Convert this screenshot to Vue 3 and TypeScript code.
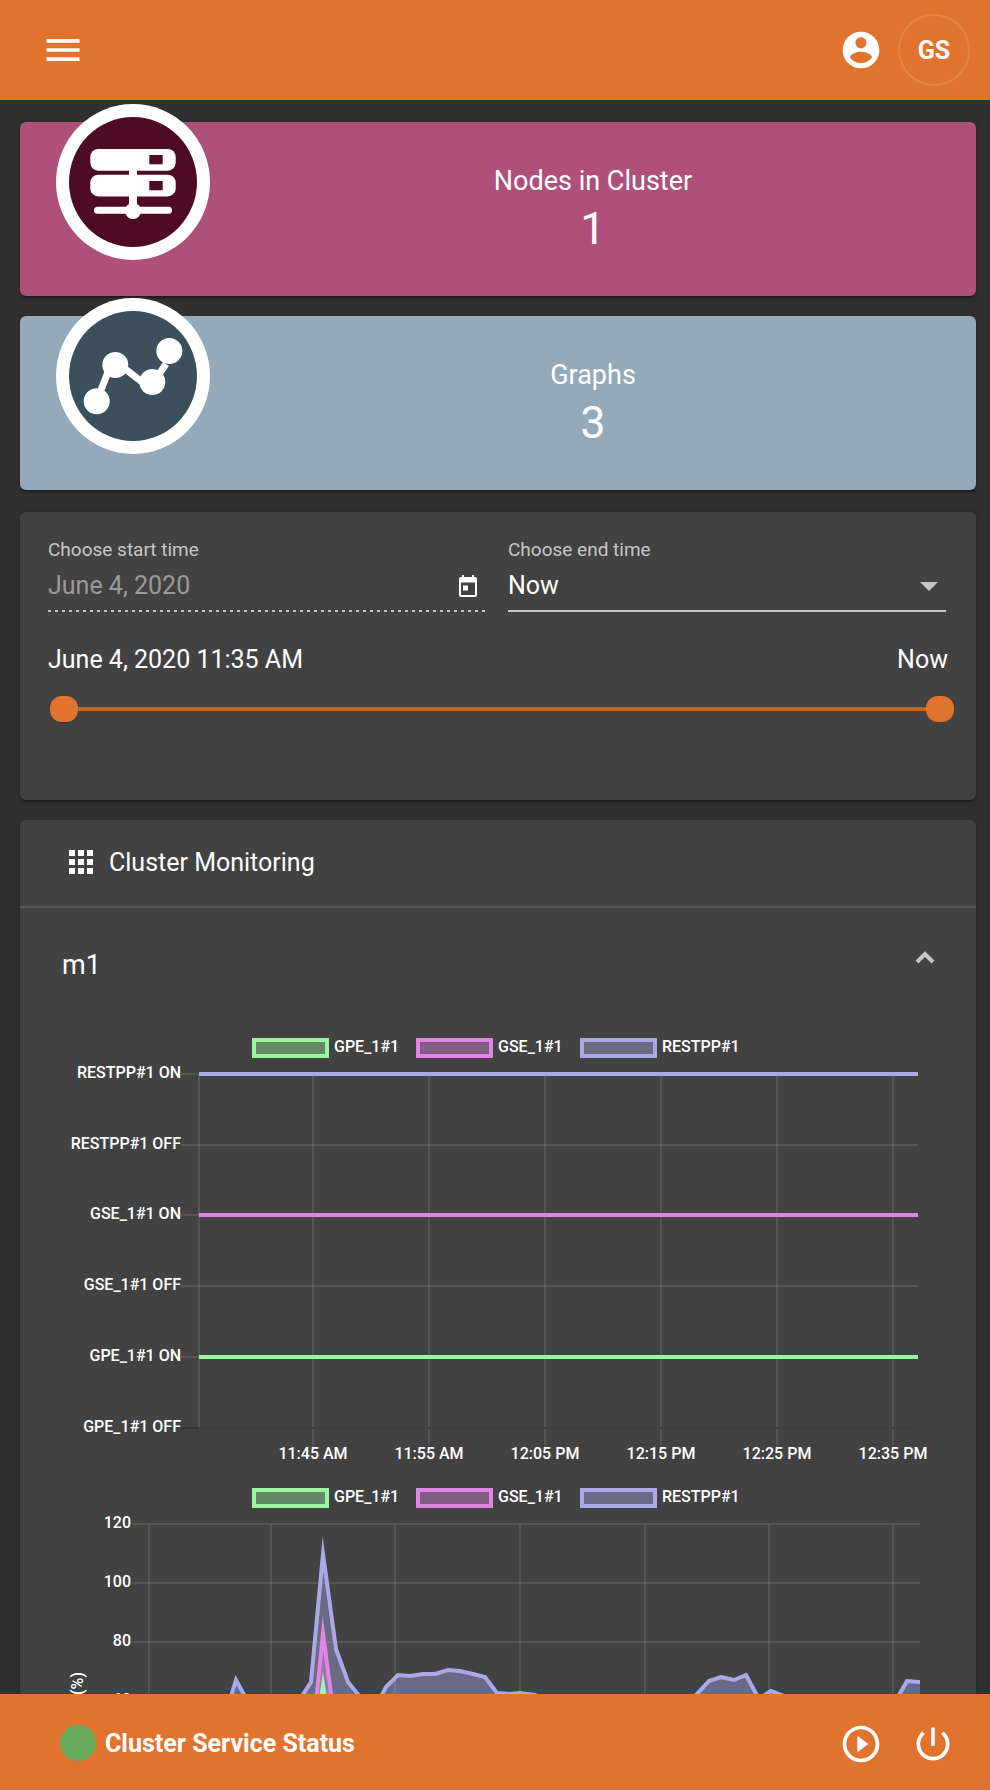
<script setup lang="ts">
import { ref } from 'vue'

type Point = [number, number]
interface Series {
  name: string
  color: string
  boxX: number
  textX: number
}

const startDate = ref('June 4, 2020')
const endTime = ref('Now')
const rangeStart = ref(0)
const rangeEnd = ref(100)
const expanded = ref(true)

const series: Series[] = [
  { name: 'GPE_1#1', color: '#9cf5a0', boxX: 234, textX: 314 },
  { name: 'GSE_1#1', color: '#e184e3', boxX: 398, textX: 478 },
  { name: 'RESTPP#1', color: '#aba8e8', boxX: 562, textX: 642 },
]

const statusRows = [
  { label: 'RESTPP#1 ON', y: 54, color: '#aba8e8' },
  { label: 'RESTPP#1 OFF', y: 125, color: '' },
  { label: 'GSE_1#1 ON', y: 195, color: '#e184e3' },
  { label: 'GSE_1#1 OFF', y: 266, color: '' },
  { label: 'GPE_1#1 ON', y: 337, color: '#9cf5a0' },
]

const times = ['11:45 AM', '11:55 AM', '12:05 PM', '12:15 PM', '12:25 PM', '12:35 PM'].map(
  (label, i) => ({ label, x: 293 + i * 116 }),
)

const usageRows = [120, 100, 80, 60].map((value, i) => ({ value, y: 54 + i * 59 }))
const usageColumns = [251, 375, 500, 625, 749, 873]

const restpp: Point[] = [
  [129, 263], [204, 249], [216, 210], [228, 232], [241, 250], [266, 250], [279, 231], [291, 212],
  [303, 84], [316, 179], [328, 212], [341, 228], [353, 243], [366, 217], [378, 205], [390, 206],
  [403, 204], [415, 204], [428, 200], [440, 201], [453, 204], [465, 207], [477, 223], [490, 224],
  [500, 223], [515, 225], [540, 237], [664, 237], [676, 225], [689, 211], [701, 207], [714, 210],
  [726, 205], [739, 229], [751, 221], [764, 226], [788, 240], [863, 240], [875, 232], [887, 211],
  [900, 212],
]
const gse: Point[] = [[129, 320], [279, 310], [291, 284], [303, 163], [316, 262], [328, 300], [900, 320]]
const gpe: Point[] = [[129, 380], [279, 370], [291, 296], [303, 215], [316, 296], [328, 360], [900, 380]]

const areas = [
  { color: '#aba8e8', points: restpp },
  { color: '#e184e3', points: gse },
  { color: '#9cf5a0', points: gpe },
]

const line = (points: Point[]): string => points.map((p) => p.join(',')).join(' ')
const area = (points: Point[]): string => `${line(points)} 900,408 129,408`
</script>

<template>
  <div class="app">
    <header class="topbar">
      <button class="icon-btn" type="button" aria-label="Menu">
        <svg class="icon" viewBox="0 0 24 24"><path d="M3 18h18v-2H3v2zm0-5h18v-2H3v2zm0-7v2h18V6H3z" /></svg>
      </button>
      <div class="account">
        <button class="icon-btn" type="button" aria-label="Account">
          <svg class="icon" viewBox="0 0 24 24">
            <path d="M12 2C6.480 2 2 6.480 2 12s4.480 10 10 10 10-4.480 10-10S17.520 2 12 2zm0 3c1.660 0 3 1.340 3 3s-1.340 3-3 3-3-1.340-3-3 1.340-3 3-3zm0 14.200c-2.500 0-4.710-1.280-6-3.220.030-1.990 4-3.080 6-3.080 1.990 0 5.970 1.090 6 3.080-1.290 1.940-3.500 3.220-6 3.220z" />
          </svg>
        </button>
        <button class="avatar" type="button">GS</button>
      </div>
    </header>

    <main class="content">
      <section class="card metric nodes">
        <svg class="badge" viewBox="0 0 154 156" aria-hidden="true">
          <ellipse cx="77" cy="78" rx="77" ry="78" fill="#fff" />
          <ellipse cx="77" cy="78" rx="64" ry="65" fill="#4d0b26" />
          <g fill="#fff">
            <rect x="34.300" y="45" width="85.400" height="21.700" rx="8" />
            <rect x="34.300" y="70.700" width="85.400" height="21.700" rx="8" />
            <rect x="73" y="60" width="8" height="48" />
            <rect x="38" y="102.700" width="78" height="7" rx="3.500" />
            <circle cx="77" cy="107" r="8" />
          </g>
          <g fill="#4d0b26">
            <rect x="93.300" y="51" width="13.400" height="9.300" />
            <rect x="93.300" y="77" width="13.400" height="9.300" />
          </g>
        </svg>
        <div class="metric-text">
          <h2>Nodes in Cluster</h2>
          <p>1</p>
        </div>
      </section>

      <section class="card metric graphs">
        <svg class="badge" viewBox="0 0 154 156" aria-hidden="true">
          <ellipse cx="77" cy="78" rx="77" ry="78" fill="#fff" />
          <ellipse cx="77" cy="78" rx="64" ry="65" fill="#3c505c" />
          <path d="M43 97L54 69M64 67l26 20M99 82l11-16" fill="none" stroke="#fff" stroke-width="7" />
          <g fill="#fff">
            <circle cx="40.700" cy="103.300" r="13" />
            <circle cx="59.300" cy="67" r="13" />
            <circle cx="96.300" cy="84" r="13" />
            <circle cx="113.300" cy="53" r="13" />
          </g>
        </svg>
        <div class="metric-text">
          <h2>Graphs</h2>
          <p>3</p>
        </div>
      </section>

      <section class="card period">
        <div class="fields">
          <div class="field">
            <label for="start">Choose start time</label>
            <div class="control dotted">
              <input id="start" v-model="startDate" type="text" readonly />
              <button class="icon-btn calendar" type="button" aria-label="Open calendar">
                <svg viewBox="0 0 18 22" width="18" height="22">
                  <path d="M3 0h2v2h8V0h2v2h1a2 2 0 0 1 2 2v16a2 2 0 0 1-2 2H2a2 2 0 0 1-2-2V4a2 2 0 0 1 2-2h1zM2 7.500V20h14V7.500zM4 10.500h5v5H4z" fill-rule="evenodd" />
                </svg>
              </button>
            </div>
          </div>
          <div class="field">
            <label for="end">Choose end time</label>
            <div class="control solid">
              <select id="end" v-model="endTime">
                <option>Now</option>
              </select>
              <svg class="arrow" viewBox="0 0 18 9" width="18" height="9"><path d="M0 0h18L9 9z" /></svg>
            </div>
          </div>
        </div>
        <div class="range-labels">
          <span>June 4, 2020 11:35 AM</span>
          <span>Now</span>
        </div>
        <div class="range">
          <span class="track"></span>
          <input v-model.number="rangeStart" type="range" min="0" max="100" aria-label="Range start" />
          <input v-model.number="rangeEnd" type="range" min="0" max="100" aria-label="Range end" />
        </div>
      </section>

      <section class="card monitoring">
        <div class="card-head">
          <svg class="apps" viewBox="0 0 24 24" aria-hidden="true">
            <path d="M4 8h4V4H4v4zm6 12h4v-4h-4v4zm-6 0h4v-4H4v4zm0-6h4v-4H4v4zm6 0h4v-4h-4v4zm6-10v4h4V4h-4zm-6 4h4V4h-4v4zm6 6h4v-4h-4v4zm0 6h4v-4h-4v4z" />
          </svg>
          <h2>Cluster Monitoring</h2>
        </div>
        <button class="panel-head" type="button" :aria-expanded="expanded" @click="expanded = !expanded">
          <span>m1</span>
          <svg viewBox="0 0 20 24" width="20" height="24"><path d="M2 9l8-8 8 8" /></svg>
        </button>

        <div v-if="expanded" class="charts">
          <svg class="chart" viewBox="0 0 956 450" role="img" aria-label="Service status">
            <g v-for="s in series" :key="s.name">
              <rect :x="s.boxX" y="20" width="73" height="16" :fill="s.color" fill-opacity="0.4" :stroke="s.color" stroke-width="4" />
              <text :x="s.textX" y="32">{{ s.name }}</text>
            </g>
            <g class="grid">
              <line v-for="r in statusRows" :key="r.y" x1="161" x2="898" :y1="r.y" :y2="r.y" />
              <line x1="179" x2="179" y1="54" y2="408" />
              <line v-for="t in times" :key="t.x" :x1="t.x" :x2="t.x" y1="54" y2="425" />
            </g>
            <line class="zero" x1="161" x2="179" y1="408" y2="408" />
            <line class="base" x1="180" x2="898" y1="408" y2="408" />
            <template v-for="r in statusRows" :key="r.label">
              <line v-if="r.color" x1="179" x2="898" :y1="r.y" :y2="r.y" :stroke="r.color" stroke-width="4" />
              <text class="end" x="161" :y="r.y + 4">{{ r.label }}</text>
            </template>
            <text class="end" x="161" y="412">GPE_1#1 OFF</text>
            <text v-for="t in times" :key="t.label" class="mid" :x="t.x" y="439">{{ t.label }}</text>
          </svg>

          <svg class="chart" viewBox="0 0 956 450" role="img" aria-label="Usage in percent">
            <g v-for="s in series" :key="s.name">
              <rect :x="s.boxX" y="20" width="73" height="16" :fill="s.color" fill-opacity="0.4" :stroke="s.color" stroke-width="4" />
              <text :x="s.textX" y="32">{{ s.name }}</text>
            </g>
            <g class="grid">
              <line v-for="r in usageRows" :key="r.value" x1="112" x2="900" :y1="r.y" :y2="r.y" />
              <line x1="129" x2="129" y1="54" y2="408" />
              <line v-for="x in usageColumns" :key="x" :x1="x" :x2="x" y1="54" y2="425" />
            </g>
            <g v-for="a in areas" :key="a.color">
              <polygon :points="area(a.points)" :fill="a.color" fill-opacity="0.4" />
              <polyline :points="line(a.points)" fill="none" :stroke="a.color" stroke-width="4" stroke-miterlimit="10" />
            </g>
            <text v-for="r in usageRows" :key="r.value" class="end" x="111" :y="r.y + 4">{{ r.value }}</text>
            <text class="end" transform="translate(63 202) rotate(-90)">(%)</text>
          </svg>
        </div>
      </section>
    </main>

    <footer class="statusbar">
      <span class="dot"></span>
      <strong>Cluster Service Status</strong>
      <div class="actions">
        <button class="icon-btn" type="button" aria-label="Start">
          <svg class="icon" viewBox="0 0 24 24">
            <path d="M10 16.500l6-4.500-6-4.500v9zM12 2C6.480 2 2 6.480 2 12s4.480 10 10 10 10-4.480 10-10S17.520 2 12 2zm0 18c-4.410 0-8-3.590-8-8s3.590-8 8-8 8 3.590 8 8-3.590 8-8 8z" />
          </svg>
        </button>
        <button class="icon-btn" type="button" aria-label="Stop">
          <svg class="icon" viewBox="0 0 24 24">
            <path d="M13 3h-2v10h2V3zm4.830 2.170l-1.420 1.420C17.990 7.860 19 9.810 19 12c0 3.870-3.130 7-7 7s-7-3.130-7-7c0-2.190 1.010-4.140 2.580-5.420L6.170 5.170C4.230 6.820 3 9.260 3 12c0 4.970 4.030 9 9 9s9-4.030 9-9c0-2.740-1.230-5.180-3.170-6.830z" />
          </svg>
        </button>
      </div>
    </footer>
  </div>
</template>

<style>
body {
  margin: 0;
  background: #303030;
}
</style>

<style scoped>
.app {
  display: flex;
  flex-direction: column;
  height: 100vh;
  background: #303030;
  color: #fff;
  font-family: Roboto, "Liberation Sans", sans-serif;
  font-size: 25px;
}
.app * {
  box-sizing: border-box;
}
h2,
p {
  margin: 0;
  font-weight: 400;
}
button,
input,
select {
  margin: 0;
  padding: 0;
  border: 0;
  background: none;
  color: inherit;
  font: inherit;
}
svg {
  display: block;
}
.icon-btn {
  display: flex;
  fill: #fff;
}
.icon {
  width: 44px;
  height: 44px;
}
.topbar {
  display: flex;
  align-items: center;
  justify-content: space-between;
  flex: none;
  height: 100px;
  padding: 0 20px 0 41px;
  background: #e0742e;
}
.account {
  display: flex;
  align-items: center;
  gap: 15px;
}
.avatar {
  width: 72px;
  height: 72px;
  border: 2px solid rgba(255, 255, 255, 0.12);
  border-radius: 50%;
  font-weight: 700;
}
.content {
  display: flex;
  flex-direction: column;
  flex: 1;
  min-height: 0;
  padding: 22px 14px 0 20px;
  overflow-y: auto;
  scrollbar-width: none;
}
.card {
  flex: none;
  border-radius: 6px;
  background: #424242;
  box-shadow: 0 3px 2px -1px rgba(0, 0, 0, 0.3), 0 1px 5px rgba(0, 0, 0, 0.2);
}
.metric {
  display: flex;
  align-items: flex-start;
  padding-left: 36px;
}
.nodes {
  margin-bottom: 20px;
  background: #ae5079;
}
.graphs {
  margin-bottom: 22px;
  background: #94aab8;
}
.badge {
  flex: none;
  width: 154px;
  height: 156px;
  margin-top: -18px;
}
.metric-text {
  flex: 1;
  padding: 37px 0 41px;
  text-align: center;
}
.metric-text h2 {
  font-size: 27px;
  line-height: 44px;
}
.metric-text p {
  font-size: 45px;
  line-height: 52px;
}
.period {
  margin-bottom: 20px;
  padding: 26px 0 77px;
}
.fields {
  display: grid;
  grid-template-columns: 1fr 1fr;
  gap: 22px;
  padding: 0 30px 0 28px;
}
.field label {
  display: block;
  color: #c6c6c6;
  font-size: 19px;
  line-height: 24px;
}
.control {
  display: flex;
  align-items: center;
  height: 50px;
  padding-bottom: 2px;
}
.control input,
.control select {
  flex: 1;
  min-width: 0;
  height: 48px;
  padding-bottom: 2px;
  outline: none;
  appearance: none;
}
.control input {
  color: #9a9a9a;
}
.dotted {
  background: linear-gradient(to right, #c6c6c6 3px, transparent 3px) left bottom / 7px 2px repeat-x;
}
.solid {
  position: relative;
  border-bottom: 2px solid #c6c6c6;
  padding-bottom: 0;
}
.calendar {
  padding-right: 9px;
}
.arrow {
  position: absolute;
  right: 8px;
  fill: #c6c6c6;
  pointer-events: none;
}
.range-labels {
  display: flex;
  justify-content: space-between;
  padding: 32px 28px 0;
  line-height: 32px;
}
.range {
  display: grid;
  align-items: center;
  height: 28px;
  margin: 19px 22px 0 30px;
}
.range > * {
  grid-area: 1 / 1;
}
.track {
  height: 4px;
  background: #bf662c;
}
.range input {
  width: 100%;
  height: 28px;
  appearance: none;
  pointer-events: none;
}
.range input::-webkit-slider-thumb {
  width: 28px;
  height: 26px;
  border-radius: 12px;
  background: #e0742e;
  appearance: none;
  pointer-events: auto;
}
.card-head {
  display: flex;
  align-items: center;
  gap: 10px;
  height: 88px;
  padding: 0 43px 2px;
  border-bottom: 2px solid #575757;
}
.card-head h2 {
  font-size: 25px;
}
.apps {
  width: 36px;
  height: 36px;
  fill: #fff;
}
.panel-head {
  display: flex;
  align-items: center;
  justify-content: space-between;
  width: 100%;
  height: 112px;
  padding: 2px 41px 0 42px;
  font-size: 27px;
}
.panel-head path {
  fill: none;
  stroke: #c6c6c6;
  stroke-width: 4;
}
.panel-head svg {
  overflow: visible;
}
.chart {
  width: 100%;
  height: auto;
}
.chart text {
  fill: #fff;
  font-size: 16px;
  font-weight: 500;
}
.chart .end {
  text-anchor: end;
}
.chart .mid {
  text-anchor: middle;
}
.grid line {
  stroke: rgba(255, 255, 255, 0.1);
  stroke-width: 2;
}
.zero {
  stroke: #333;
  stroke-width: 2;
}
.base {
  stroke: #3f3f3f;
  stroke-width: 2;
}
.statusbar {
  display: flex;
  align-items: center;
  flex: none;
  height: 96px;
  padding: 2px 35px 0 60px;
  background: #e0742e;
}
.dot {
  width: 36px;
  height: 36px;
  margin-right: 9px;
  border-radius: 50%;
  background: #67aa5b;
}
.actions {
  display: flex;
  gap: 28px;
  margin-left: auto;
  padding-top: 2px;
}
</style>
